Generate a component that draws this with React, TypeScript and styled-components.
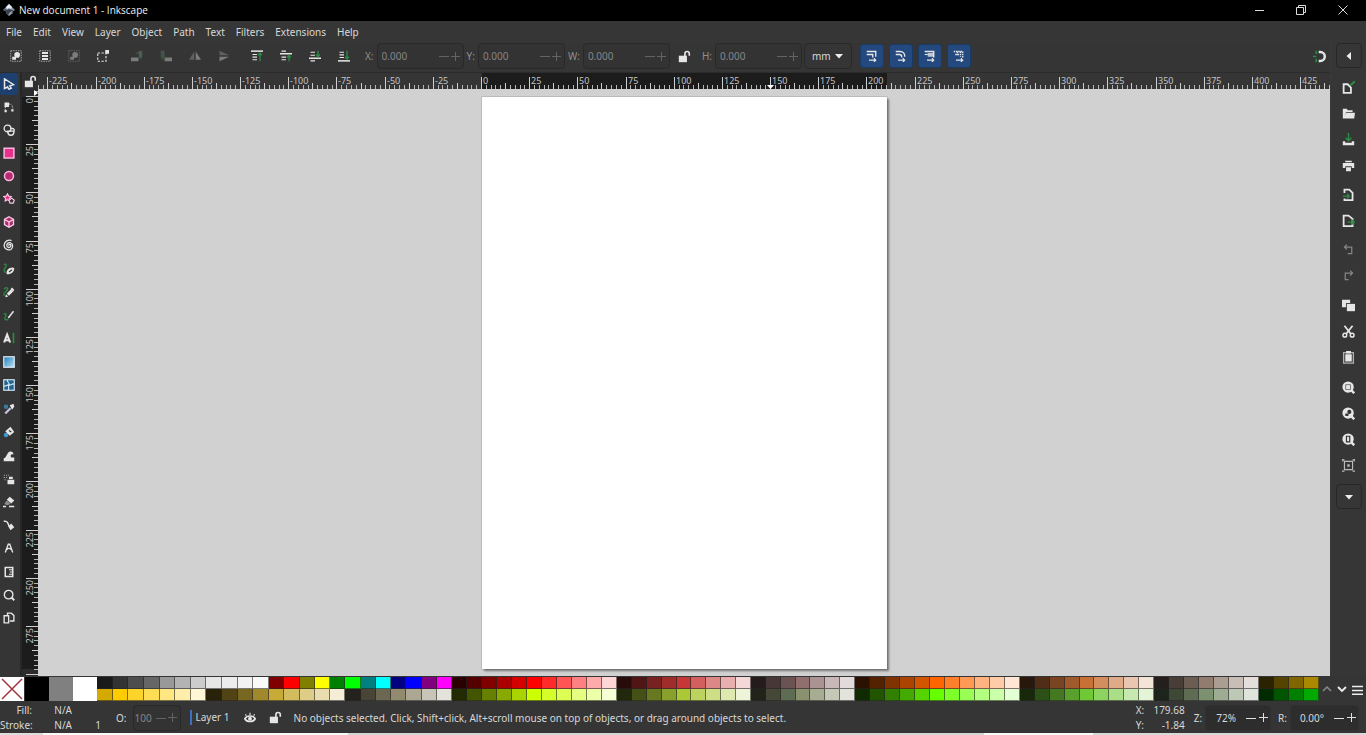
import React from 'react';
import styled, { createGlobalStyle, css } from 'styled-components';

const GlobalStyle = createGlobalStyle`
  * { box-sizing: border-box; }
  body { margin: 0; background: #353535; }
  body, button, input, select { font-family: "Noto Sans", "Open Sans", sans-serif; font-size: 10px; color: #d8d8d8; }
  button { border: 0; padding: 0; background: none; cursor: default; }
`;

const GREEN = '#2c8a43';
const LIGHT = '#e6e6e6';

/* ---------- shell ---------- */
const Shell = styled.div`
  display: flex;
  flex-direction: column;
  min-height: 100vh;
  background: #353535;
  overflow: hidden;
`;
const TitleBar = styled.header`
  display: flex;
  align-items: center;
  height: 21px;
  padding: 0 2px 1px 3px;
  background: #000;
`;
const Title = styled.h1`
  flex: 1;
  margin: 0 0 0 4px;
  font: 400 10px/20px "Open Sans", "Noto Sans", sans-serif;
  color: #f0f0f0;
`;
const WindowButton = styled.button`
  display: grid;
  place-items: center;
  width: 42px;
  height: 20px;
`;
const MenuBar = styled.nav`
  display: flex;
  gap: 11px;
  height: 22px;
  padding-left: 6px;
  background: #363636;
`;
const MenuItem = styled.button`
  line-height: 22px;
`;
const Body = styled.div`
  display: flex;
  flex: 1;
`;
const Work = styled.div`
  display: flex;
  flex-direction: column;
  flex: 1;
  min-width: 0;
`;

/* ---------- tool controls bar ---------- */
const ControlBar = styled.div`
  display: flex;
  align-items: center;
  height: 30px;
  padding: 0 0 3px 1px;
  border-bottom: 1px solid #2c2c2c;
`;
const ControlGroup = styled.div<{ $gap?: number }>`
  display: flex;
  margin-right: ${p => p.$gap ?? 0}px;
`;
const IconButton = styled.button<{ $dim?: boolean; $narrow?: boolean }>`
  display: grid;
  place-items: center;
  width: ${p => (p.$narrow ? 22 : 29)}px;
  height: 26px;
  opacity: ${p => (p.$dim ? 0.4 : 1)};
`;
const SpinLabel = styled.label`
  display: flex;
  align-items: center;
  gap: 3px;
  margin-left: 3px;
  color: #8f8f8f;
`;
const SpinBox = styled.span<{ $w: number; $bright?: boolean; $tight?: boolean }>`
  display: flex;
  align-items: center;
  width: ${p => p.$w}px;
  height: 26px;
  padding: 0 1px 0 ${p => (p.$tight ? 1 : 4)}px;
  border: 1px solid ${p => (p.$bright ? '#303030' : '#292929')};
  border-radius: 4px;
  background: ${p => (p.$bright ? '#2d2d2d' : '#333')};
  color: ${p => (p.$bright ? '#e0e0e0' : '#636363')};
`;
const SpinInput = styled.input<{ $bright?: boolean; $right?: boolean }>`
  flex: 1;
  min-width: 0;
  padding: 0;
  border: 0;
  outline: 0;
  background: none;
  text-align: ${p => (p.$right ? 'right' : 'left')};
  color: ${p => (p.$bright ? '#d8d8d8' : '#858585')};
  ${p => p.$right && css`padding-right: 9px;`}
`;
const StepButton = styled.button`
  display: grid;
  place-items: center;
  width: 12px;
  height: 20px;
  color: inherit;
`;
const UnitPicker = styled.span`
  display: flex;
  align-items: center;
  width: 48px;
  height: 26px;
  margin: 0 8px 0 2px;
  padding-right: 8px;
  border: 1px solid #282828;
  border-radius: 4px;
`;
const UnitSelect = styled.select`
  flex: 1;
  min-width: 0;
  appearance: none;
  border: 0;
  padding: 0 0 0 7px;
  background: none;
`;
const ToggleRow = styled.div`
  display: flex;
  gap: 5px;
  flex: 1;
`;
const Toggle = styled.button`
  display: grid;
  place-items: center;
  width: 24px;
  height: 24px;
  border: 1px solid #1a3a66;
  border-radius: 3px;
  background: #23497f;
`;

/* ---------- tools, rulers, canvas ---------- */
const Stage = styled.div`
  display: flex;
  flex: 1;
`;
const Toolbox = styled.aside`
  display: flex;
  flex-direction: column;
  width: 22px;
  border-right: 2px solid #272727;
`;
const Tool = styled.button<{ $active?: boolean; $space?: boolean }>`
  display: grid;
  place-items: center;
  width: 18px;
  height: ${p => (p.$active ? 22 : 23)}px;
  margin-top: ${p => (p.$space ? 1 : 0)}px;
  border-radius: 2px;
  background: ${p => (p.$active ? '#1d4070' : 'none')};
`;
const Editor = styled.main`
  display: grid;
  flex: 1;
  grid-template-columns: 16px minmax(0, 1fr);
  grid-template-rows: 16px 1fr;
`;
const RulerLock = styled.button`
  display: grid;
  place-items: center;
  background: #303030;
`;
const RulerStrip = styled.svg<{ $bg: string }>`
  display: block;
  width: 100%;
  height: 100%;
  background: ${p => p.$bg};
  overflow: hidden;
`;
const RulerHolder = styled.div`
  height: 0;
  min-height: 100%;
`;
const Canvas = styled.div`
  display: flex;
  justify-content: center;
  align-items: flex-start;
  padding: 8px 0 7px 0;
  background: #d1d1d1;
`;
const Page = styled.div`
  width: 405px;
  height: 572px;
  background: #fff;
  box-shadow: 0 0 1px #555, 2px 2px 2px #777;
`;

/* ---------- command bar ---------- */
const CommandBar = styled.aside`
  display: flex;
  flex-direction: column;
  align-items: center;
  width: 36px;
  padding: 0 2px;
  background: #363636;
  border-left: 1px solid #3a3a3a;
`;
const Expander = styled.button<{ $low?: boolean }>`
  display: grid;
  place-items: center;
  width: 26px;
  height: 25px;
  margin: ${p => (p.$low ? '6px 0 0' : '0 0 6px')};
  border: 1px solid #272727;
  border-radius: 4px;
`;
const Command = styled.button<{ $space?: number; $dim?: boolean }>`
  display: grid;
  place-items: center;
  width: 26px;
  height: 26px;
  margin-top: ${p => p.$space ?? 0}px;
  opacity: ${p => (p.$dim ? 0.45 : 1)};
`;

/* ---------- palette ---------- */
const Palette = styled.div`
  display: flex;
  height: 26px;
  padding: 1px 0;
`;
const BigSwatch = styled.button<{ $c: string }>`
  width: 24px;
  height: 24px;
  margin-right: 1px;
  background: ${p => p.$c};
  & + & { margin-right: 0; }
`;
const SwatchSet = styled.div<{ $w: number; $n: number }>`
  display: grid;
  flex: ${p => p.$w} 0 0;
  grid-template-columns: repeat(${p => p.$n}, 1fr);
  grid-template-rows: 12px 12px;
`;
const Swatch = styled.button<{ $c: string }>`
  background: ${p => p.$c};
  border: solid #24242499;
  border-width: 0 1px 1px 0;
`;
const PaletteNav = styled.div`
  display: flex;
  width: 47px;
  justify-content: space-around;
  align-items: center;
  padding-top: 2px;
`;

/* ---------- status bar ---------- */
const StatusBar = styled.footer`
  display: flex;
  align-items: center;
  height: 31px;
`;
const StyleTable = styled.dl`
  display: grid;
  grid-template-columns: 32px 48px 21px;
  width: 116px;
  margin: 0;
  line-height: 15px;
  dt { text-align: right; }
  dd { margin: 0; text-align: right; }
  dd.paint { padding-right: 8px; }
`;
const StatusField = styled.label<{ $gap: number }>`
  display: flex;
  align-items: center;
  gap: ${p => p.$gap}px;
  margin-right: 7px;
`;
const LayerButton = styled.button`
  height: 15px;
  padding-left: 4px;
  border-left: 2px solid #3f6fc0;
  line-height: 15px;
  margin: 0 7px 0 2px;
`;
const StatusIcon = styled.button`
  display: grid;
  place-items: center;
  width: 26px;
  height: 22px;
`;
const Message = styled.p`
  flex: 1;
  margin: 0 0 0 5px;
  white-space: nowrap;
`;
const Coords = styled.dl`
  display: grid;
  grid-template-columns: 12px 37px;
  margin: 0 9px 0 0;
  line-height: 15px;
  dd { margin: 0; text-align: right; }
`;
const Taskbar = styled.div`
  height: 2px;
  background: linear-gradient(90deg, #ddd 0 43px, #fafafa 43px 348px, #d6d6d6 348px 72%, #fafafa 72% 80%, #d9d9d9 80%);
`;

/* ---------- icons ---------- */
type IconProps = { s?: number; children: React.ReactNode };
const Icon = ({ s = 12, children }: IconProps) => (
  <svg width={s} height={s} viewBox="0 0 16 16" fill="none" stroke={LIGHT} strokeWidth="1.8" aria-hidden="true">{children}</svg>
);
const fill = { fill: LIGHT, stroke: 'none' };
const green = { stroke: GREEN };
const greenFill = { fill: GREEN, stroke: 'none' };

const Triangle = ({ dir = 'down' }: { dir?: 'down' | 'left' }) => (
  <svg width="8" height="8" viewBox="0 0 8 8" aria-hidden="true">
    <path fill="#eee" d={dir === 'down' ? 'M0 2h8L4 6.5z' : 'M6 0v8L1.500 4z'} />
  </svg>
);
const Lock = () => (
  <Icon s={13}><path {...fill} d="M1 7h10v8H1z" /><path strokeWidth="2" d="M8.500 8V4.500a2.700 2.700 0 0 1 5.400 0V7" /></Icon>
);
const frame = <path strokeWidth="1.200" strokeDasharray="2 1.200" opacity=".7" d="M1 1h14v14H1z" />;
const selection = <>{frame}<circle cx="9.500" cy="6.500" r="3.800" {...fill} /><path {...fill} d="M3 9h5v4H3z" /></>;

const selectIcons: [string, boolean, React.ReactNode][] = [
  ['Select all', false, selection],
  ['Select all in all layers', false, <>{frame}<path d="M4 4h8M4 8h8M4 12h8" strokeWidth="2.500" /></>],
  ['Deselect', true, selection],
  ['Touch selection', false, <><path strokeDasharray="3 2" strokeWidth="1.500" d="M1 4h11v11H1z" /><path {...fill} d="M11 0h5v5h-5z" /></>],
];
const rotateIcons: [string, boolean, React.ReactNode][] = [
  ['Rotate 90 counter-clockwise', true, <><path {...fill} d="M0 10h10v5H0z" /><path d="M6 4h7v9" {...green} /><path {...fill} d="M10 1h5v9h-5z" opacity=".4" /></>],
  ['Rotate 90 clockwise', true, <><path {...fill} d="M6 10h10v5H6z" /><path {...fill} d="M1 1h5v9H1z" opacity=".4" /><path d="M3 4v8h4" {...green} /></>],
  ['Flip horizontally', true, <><path {...fill} opacity=".6" d="M7 2v11H0z" /><path {...fill} d="M9 2v11h7z" /></>],
  ['Flip vertically', true, <><path {...fill} opacity=".6" d="M2 7h13L2 1z" /><path {...fill} d="M2 9h13L2 15z" /></>],
];
const orderIcons: [string, boolean, React.ReactNode][] = [
  ['Raise to top', false, <><path strokeWidth="2" d="M0 1.500h16" /><path strokeWidth="1.500" d="M2 6h6M2 9.500h6M2 13h6" /><path d="M12 15V4M9.500 7L12 4l2.500 3" {...green} /></>],
  ['Raise', false, <><path strokeWidth="2" d="M0 5h16" /><path strokeWidth="1.500" d="M2 1.500h6M2 9.500h6M2 13h6" /><path d="M12 15V7M9.500 10L12 7l2.500 3" {...green} /></>],
  ['Lower', false, <><path strokeWidth="2" d="M0 11h16" /><path strokeWidth="1.500" d="M2 3h6M2 7h6M2 14.500h6" /><path d="M12 1v8M9.500 6L12 9l2.500-3" {...green} /></>],
  ['Lower to bottom', false, <><path strokeWidth="2" d="M0 14.500h16" /><path strokeWidth="1.500" d="M2 3h6M2 6.500h6M2 10h6" /><path d="M12 1v11M9.500 9l2.500 3 2.500-3" {...green} /></>],
];
const scaleArrow = <path strokeWidth="1.500" d="M4 13.500h9M10.500 11l2.500 2.500-2.500 2.500" />;
const scaleIcons: [string, React.ReactNode][] = [
  ['Scale stroke width', <><path d="M1 2h12v7M1 6h8v4" />{scaleArrow}</>],
  ['Scale rounded corners', <><path d="M1 2h6a6 6 0 0 1 6 6v1M1 6h5a3 3 0 0 1 3 3v1" />{scaleArrow}</>],
  ['Move gradients', <><path d="M1 2h12v8" /><path {...fill} d="M5 4h8v5H5z" opacity=".8" /><path strokeWidth="1.500" d="M1 6h4" />{scaleArrow}</>],
  ['Move patterns', <><path strokeDasharray="2 1" d="M1 2h12v8M3 6h9M6 2v6M10 2v7" />{scaleArrow}</>],
];

const PINK = '#e8308c';
const BLUE = '#3a9ad0';
const tools: [string, boolean, React.ReactNode][] = [
  ['Selector', false, <path strokeWidth="2" d="M2 1l12 8-5 1.500 2 3-3 1.500-2-3-4 2z" />],
  ['Node', false, <><path {...fill} d="M2 2h6v6H2zM11 11h3v3h-3zM2 12h3v3H2z" /><path strokeWidth="1.200" strokeDasharray="1.500 1.500" d="M8 4c4 0 5 3 5 7M3 8v4" /></>],
  ['Shape builder', false, <><circle cx="6" cy="6" r="4.500" /><path d="M6 9.500h8.500V11a4 4 0 0 1-8 0zM10 6h2.500a2.500 2.500 0 0 1 2 4" /></>],
  ['Rectangle', false, <path fill={PINK} stroke="#ffb5dc" strokeWidth="2" d="M1.500 1.500h13v13h-13z" />],
  ['Ellipse', false, <circle cx="8" cy="8" r="6" fill="#b52c72" stroke="#ffb5dc" strokeWidth="2" />],
  ['Star', false, <><path fill={PINK} stroke="#ffc5e2" strokeWidth="1.500" d="M6 1l1.600 3.200 3.400.5-2.500 2.500.6 3.500L6 9l-3.100 1.700.6-3.500L1 4.700l3.400-.5z" /><path fill="#333" stroke="#ffc5e2" strokeWidth="1.600" d="M11.500 7l3.500 2.500-1.400 4H9.400L8 9.500z" /></>],
  ['3D box', false, <><path fill="#a62c6a" stroke="#ffc5e2" d="M8 1l6 3.500v7L8 15l-6-3.500v-7z" /><path stroke="#ffc5e2" d="M2 4.500L8 8l6-3.500M8 8v7" /></>],
  ['Spiral', false, <path strokeWidth="1.700" d="M8 9c-1-2 2-2.500 2.500-.5C11 11 7 12.500 5.500 10 4 7 7 4 10 5c4 1.500 3.500 7 .5 9C6 16 1 12.500 1.500 8 2 3 7 .5 11.500 2" />],
  ['Pen', true, <><path d="M1 2c4-2 4 2 1.500 5s0 5 2 6" {...green} /><path {...fill} d="M5 15c-1-5 2-9 8-9l2 1c0 5-4 8-9 8z" /><path stroke="#333" strokeWidth="1.500" d="M8 12l4-3" /></>],
  ['Pencil', false, <><path d="M1 4c5-4 7 0 3 3s-3 4-2 6" {...green} /><path strokeWidth="4" d="M6.500 11.500l6-6" /><path {...fill} d="M12 2l3 3-1 2-4-3zM3 15l1-4 3 3z" /></>],
  ['Calligraphy', false, <><path d="M1 7c3-2 4 1 2 4s0 4 4 3" {...green} /><path strokeWidth="2" d="M7 12l7-9" /></>],
  ['Text', false, <><path strokeWidth="2.800" d="M1.500 14L5.500 3.500l4 10.500M3 11h5" /><path strokeWidth="2.200" d="M14 1v14" {...green} /></>],
  ['Gradient', true, <><defs><linearGradient id="sky" x1="0" y1="0" x2="1" y2="1"><stop offset="0" stopColor="#1f7fb8" /><stop offset="1" stopColor="#b8e2f8" /></linearGradient></defs><rect x="1" y="1" width="14" height="14" fill="url(#sky)" stroke="#e6f2fa" strokeWidth="1.500" /></>],
  ['Mesh', false, <><rect x="1" y="1" width="14" height="14" fill="#22628c" stroke="#d5ecfa" strokeWidth="1.500" /><path stroke="#d5ecfa" strokeWidth="1.500" d="M6 1c-2 3 4 4 2 7s1 4-1 7M1 9c3 2 4-2 7-1s4-3 7-1" /></>],
  ['Dropper', true, <><circle cx="4" cy="5" r="3" fill={BLUE} stroke="none" opacity=".7" /><path strokeWidth="3" stroke="#c9bfe0" d="M3 14l7-7" /><path {...fill} d="M9 3l5-2 1 4-3 4z" /></>],
  ['Paint bucket', false, <><circle cx="4" cy="12" r="3" fill={BLUE} stroke="none" /><path {...fill} d="M3 7l7-6 5 7-6 5z" /><path stroke="#333" d="M8 6l3 2" /></>],
  ['Tweak', true, <path {...fill} d="M1 15v-4c4 0 4-9 9-9 3 0 4 2 4 4-3-1-5 1-3 4h4v5z" />],
  ['Spray', false, <><path {...fill} d="M6 9h9v6H6zM8 5h5v3H8z" /><path strokeWidth="1.500" strokeDasharray="1.500 1.500" opacity=".7" d="M1 3h7M1 6h6M2 9h3" /></>],
  ['Eraser', false, <><path {...fill} d="M9 1l6 5-4 4-6-5z" /><path {...fill} opacity=".5" d="M5 6l5 4-3 2H4L2 10z" /><path strokeWidth="2" d="M0 14h4M8 14h7" /></>],
  ['Connector', false, <><path strokeWidth="2" d="M1 3c6-1 5 3 7 6l3 1" /><path {...fill} d="M11 6l4 5-5 4-3-5z" /></>],
  ['LPE tool', false, <path strokeWidth="1.800" d="M3 14L7 3h2l4 11M5 10c2-2 4-2 6 0" />],
  ['Measure', true, <><path strokeWidth="2" d="M3 2h10v12H3z" /><path strokeWidth="1.500" d="M8 5h4M9 8h3M8 11h4" /></>],
  ['Zoom', false, <><circle cx="7.500" cy="7.500" r="5.700" /><path strokeWidth="2.500" d="M11 11l4 4" /></>],
  ['Pages', false, <><path d="M1.500 5h6v9.500h-6z" /><path d="M6 4V1.500h5l3.500 3V12H9" /></>],
];

const magnifier = <><circle cx="7.500" cy="7.500" r="7" {...fill} /><path strokeWidth="3" d="M11 11l4 4" /></>;
const doc = <path d="M2 2h6l5 4v9H2z" strokeWidth="2.200" />;
const commands: [string, number, boolean, React.ReactNode][] = [
  ['New', 0, false, <><path d="M2 4h5l4 4v6.500H2z" strokeWidth="2.200" /><path d="M10 5l2-1 4-4" {...green} strokeWidth="2.500" /></>],
  ['Open', 0, false, <path {...fill} d="M1 2h5l1 2h6v2H5L3 12 5 7h11l-1 7H1z" />],
  ['Save', 0, false, <><path {...fill} d="M1 10h3v2h8v-2h3v5H1z" /><path d="M8 0v9M4.500 6L8 9.500 11.500 6" {...green} /></>],
  ['Print', 0, false, <path {...fill} d="M4 2h8v2H4zM1 5h14v6h-3V9H4v2H1zM5 10h6v5H5z" />],
  ['Import', 3, false, <><path d="M3 6V2h6l4 4v9H3v-2" strokeWidth="2.200" /><path d="M1 10h8M6 7l3 3-3 3" {...green} /></>],
  ['Export', 0, false, <>{doc}<path d="M7 10h8M12 7l3 3-3 3" {...green} /></>],
  ['Undo', 3, true, <path strokeWidth="1.500" d="M6 2L3 5l3 3M3 5h9v8H7" />],
  ['Redo', 0, true, <path strokeWidth="1.500" d="M10 2l3 3-3 3M13 5H4v8h4" />],
  ['Copy', 4, false, <><path {...fill} d="M0 1h10v4H5v5H0z" /><path {...fill} d="M6 6h10v9H6z" /></>],
  ['Cut', 0, false, <><circle cx="3.500" cy="12.500" r="2.300" /><circle cx="12.500" cy="12.500" r="2.300" /><path strokeWidth="2.200" d="M3 1l8 10M13 1L5 11" /></>],
  ['Paste', 0, false, <><path strokeWidth="1.600" opacity=".7" d="M2 2h12v13H2z" /><path {...fill} d="M5 0h6v3H5zM4 4h8v9H4z" /></>],
  ['Zoom selection', 4, false, <>{magnifier}<path stroke="#777" strokeWidth="1.200" d="M4.500 4.500h6v6h-6z" /></>],
  ['Zoom drawing', 0, false, <>{magnifier}<circle cx="9" cy="6" r="2.500" fill="#333" stroke="none" /><path fill="#333" stroke="none" d="M4 8h4v3H4z" /></>],
  ['Zoom page', 0, false, <>{magnifier}<path stroke="#333" strokeWidth="1.500" d="M5.500 4h4v7h-4z" /></>],
  ['Zoom centre page', 0, false, <g opacity=".75"><path strokeWidth="1.400" d="M3 3h10v10H3zM0 1h3M1 0v3M13 1h3M15 0v3M0 15h3M13 15h3" /><path {...fill} d="M6.500 6.500h3v3h-3z" /></g>],
];

/* ---------- rulers ---------- */
const UNIT = 48.18;
const range = (a: number, b: number) => Array.from({ length: b - a + 1 }, (_, i) => a + i);
const tickSize = (i: number) => (i % 10 === 0 ? 12 : i % 5 === 0 ? 6 : 4);

const HorizontalRuler = () => (
  <RulerStrip $bg="#353535">
    <svg x="50%" overflow="visible">
      <rect x="-202" y="0" width="405" height="16" fill="#1c1c1c" />
      {range(-160, 240).map(i => {
        const x = Math.round(-203 + (i * UNIT) / 10);
        return <path key={i} d={`M${x + 0.5} ${16 - tickSize(i)}V16`} stroke={i % 5 ? '#b5b5b5' : '#cfcfcf'} />;
      })}
      {range(-9, 17).map(i => (
        <text key={i} x={Math.round(-203 + i * UNIT) + 2} y="11" fill="#c4c4c4" fontSize="9">{i * 25}</text>
      ))}
      <path fill="#fff" d="M83 12h7l-3.500 4z" />
    </svg>
  </RulerStrip>
);
const VerticalRuler = () => (
  <RulerStrip $bg="#2c2c2c">
    <rect x="0" y="8" width="16" height="572" fill="#1c1c1c" />
    {range(-1, 160).map(i => {
      const y = Math.round(7 + (i * UNIT) / 10);
      return <path key={i} d={`M${16 - tickSize(i)} ${y + 0.5}H16`} stroke={i % 5 ? '#b5b5b5' : '#cfcfcf'} />;
    })}
    {range(0, 11).map(i => (
      <text key={i} transform={`translate(11 ${Math.round(7 + i * UNIT) + 2}) rotate(-90)`} textAnchor="end" fill="#c4c4c4" fontSize="9">{i * 25}</text>
    ))}
    <path fill="#fff" d="M12 1v6l4-3z" />
  </RulerStrip>
);

/* ---------- palette data: [width weight, top row, bottom row] ---------- */
const palette: [number, string, string][] = [
  [172, '1a1a1a 333333 4d4d4d 666666 999999 b3b3b3 cccccc e6e6e6 ececec f2f2f2 f9f9f9', 'd4aa00 ffcc00 ffd42a ffdd55 ffe680 ffeeaa fff6d5 28220b 504416 786721 a0892c'],
  [183, '800000 ff0000 808000 ffff00 008000 00ff00 008080 00ffff 000080 0000ff 800080 ff00ff', 'c8ab37 d3bc5f decd87 e9ddaf f4eed7 24221c 484537 6c6753 918a6f aca793 c8c4b7 e3e2db'],
  [165, '2b0000 550000 800000 aa0000 d40000 ff0000 ff2a2a ff5555 ff8080 ffaaaa ffd5d5', '222b00 445500 668000 88aa00 aad400 ccff00 d4ff2a ddff55 e5ff80 eeffaa f6ffd5'],
  [134, '280b0b 501616 782121 a02c2c c83737 d35f5f de8787 e9afaf f4d7d7', '22280b 445016 677821 89a02c abc837 bcd35f cdde87 dde9af eef4d7'],
  [104, '241c1c 483737 6c5353 916f6f ac9393 c8b7b7 e3dbdb', '22241c 454837 5d6c53 8a916f a7ac93 c4c8b7 e2e3db'],
  [165, '2b1100 552200 803300 aa4400 d45500 ff6600 ff7f2a ff9955 ffb380 ffccaa ffe6d5', '112b00 225500 338000 44aa00 55d400 66ff00 7fff2a 99ff55 b3ff80 ccffaa e5ffd5'],
  [134, '28170b 502d16 784421 a05a2c c87137 d38d5f deaa87 e9c6af f4e3d7', '17280b 2d5016 447821 5aa02c 71c837 8dd35f aade87 c6e9af e3f4d7'],
  [105, '241f1c 483e37 6c5d53 917c6f ac9d93 c8beb7 e3dedb', '1c241c 3e4837 5d6c53 7c916f 9dac93 bec8b7 dee3db'],
  [60, '2b2200 554400 806600 aa8800', '002b00 005500 008000 00aa00'],
];

const Steps = () => (
  <>
    <StepButton aria-label="Decrease"><svg width="10" height="10"><path stroke="currentColor" d="M0 5.500h10" /></svg></StepButton>
    <StepButton aria-label="Increase"><svg width="9" height="9"><path stroke="currentColor" d="M0 4.500h9M4.500 0v9" /></svg></StepButton>
  </>
);
const Spin = ({ label }: { label: string }) => (
  <SpinLabel>
    {label}
    <SpinBox $w={87}><SpinInput defaultValue="0.000" /><Steps /></SpinBox>
  </SpinLabel>
);
const IconRow = ({ items, gap }: { items: [string, boolean, React.ReactNode][]; gap: number }) => (
  <ControlGroup $gap={gap}>
    {items.map(([n, dim, art]) => <IconButton key={n} aria-label={n} $dim={dim}><Icon>{art}</Icon></IconButton>)}
  </ControlGroup>
);

export default function App() {
  return (
    <Shell>
      <GlobalStyle />
      <TitleBar>
        <svg width="12" height="14" viewBox="0 0 12 14" aria-hidden="true">
          <path fill="#8f98a8" d="M6 1l6 6-3 2 1 1-4 3-3-3 1-1-4-2z" />
          <path fill="#e9edf5" d="M6 1l3 3-1 2-2-1-2 1-1-2z" />
          <path fill="#39404f" d="M2 6l2 1 2-1 3 1 2 0-4 2-2 3-2-2 1-1-3-2z" />
        </svg>
        <Title>New document 1 - Inkscape</Title>
        <WindowButton aria-label="Minimize"><svg width="9" height="9"><path stroke="#ddd" d="M0 4.500h9" /></svg></WindowButton>
        <WindowButton aria-label="Restore"><svg width="10" height="10" fill="none" stroke="#ddd"><path d="M.5 2.500h7v7h-7zM2.500 2.500v-2h7v7h-2" /></svg></WindowButton>
        <WindowButton aria-label="Close"><svg width="10" height="10"><path stroke="#ddd" d="M.5.5l9 9M9.500.5l-9 9" /></svg></WindowButton>
      </TitleBar>
      <MenuBar>
        {['File', 'Edit', 'View', 'Layer', 'Object', 'Path', 'Text', 'Filters', 'Extensions', 'Help'].map(m => <MenuItem key={m}>{m}</MenuItem>)}
      </MenuBar>

      <Body>
        <Work>
          <ControlBar>
            <IconRow items={selectIcons} gap={5} />
            <IconRow items={rotateIcons} gap={4} />
            <IconRow items={orderIcons} gap={4} />
            <Spin label="X:" />
            <Spin label="Y:" />
            <Spin label="W:" />
            <IconButton aria-label="Lock proportions"><Lock /></IconButton>
            <Spin label="H:" />
            <UnitPicker>
              <UnitSelect aria-label="Unit" defaultValue="mm"><option>mm</option><option>px</option></UnitSelect>
              <Triangle />
            </UnitPicker>
            <ToggleRow>
              {scaleIcons.map(([n, art]) => <Toggle key={n} aria-label={n}><Icon>{art}</Icon></Toggle>)}
            </ToggleRow>
            <IconButton $narrow aria-label="Snapping">
              <Icon s={13}><path strokeWidth="3" d="M7 2.500h2a5.500 5.500 0 0 1 0 11H7" /><path {...greenFill} d="M3 1h2v4H3zM3 11h2v4H3zM0 7h4v2H0z" /></Icon>
            </IconButton>
          </ControlBar>

          <Stage>
            <Toolbox>
              {tools.map(([n, space, art], i) => (
                <Tool key={n} aria-label={n} $space={space} $active={i === 0}><Icon>{art}</Icon></Tool>
              ))}
            </Toolbox>
            <Editor>
              <RulerLock aria-label="Lock guides"><Lock /></RulerLock>
              <HorizontalRuler />
              <RulerHolder><VerticalRuler /></RulerHolder>
              <Canvas><Page /></Canvas>
            </Editor>
          </Stage>
        </Work>

        <CommandBar>
          <Expander aria-label="Snap options"><Triangle dir="left" /></Expander>
          {commands.map(([n, space, dim, art]) => (
            <Command key={n} aria-label={n} $space={space} $dim={dim}><Icon s={13}>{art}</Icon></Command>
          ))}
          <Expander aria-label="More commands" $low><Triangle /></Expander>
        </CommandBar>
      </Body>

      <Palette>
        <BigSwatch $c="#fff" aria-label="None">
          <svg width="24" height="24" aria-hidden="true"><path stroke="#a3343f" strokeWidth="1.500" d="M2 2l20 20M22 2L2 22" /></svg>
        </BigSwatch>
        <BigSwatch $c="#000" aria-label="Black" />
        <BigSwatch $c="#808080" aria-label="50% gray" />
        <BigSwatch $c="#fff" aria-label="White" />
        {palette.map(([w, top, bottom]) => (
          <SwatchSet key={top} $w={w} $n={top.split(' ').length}>
            {`${top} ${bottom}`.split(' ').map((c, i) => <Swatch key={i} $c={`#${c}`} aria-label={`#${c}`} />)}
          </SwatchSet>
        ))}
        <PaletteNav>
          <svg width="10" height="10" fill="none" stroke="#8a8a8a" strokeWidth="1.500"><path d="M1 6l4-4 4 4" /></svg>
          <svg width="10" height="10" fill="none" stroke="#eee" strokeWidth="1.800"><path d="M1 2l4 4 4-4" /></svg>
          <svg width="11" height="10" stroke="#eee" strokeWidth="1.500"><path d="M0 1.500h11M0 5.500h11M0 9.250h11" /></svg>
        </PaletteNav>
      </Palette>

      <StatusBar>
        <StyleTable>
          <dt>Fill:</dt><dd className="paint">N/A</dd><dd />
          <dt>Stroke:</dt><dd className="paint">N/A</dd><dd>1</dd>
        </StyleTable>
        <StatusField $gap={6}>
          O:
          <SpinBox $w={48} $tight><SpinInput defaultValue="100" /><Steps /></SpinBox>
        </StatusField>
        <LayerButton>Layer 1</LayerButton>
        <StatusIcon aria-label="Toggle layer visibility">
          <Icon><path strokeWidth="2" d="M1 9c3-5 11-5 14 0-3 5-11 5-14 0z" /><circle cx="8" cy="9" r="2.600" {...fill} /><path strokeWidth="1.500" d="M3 5L2 3M8 4V1M13 5l1-2" /></Icon>
        </StatusIcon>
        <StatusIcon aria-label="Toggle layer lock"><Lock /></StatusIcon>
        <Message>No objects selected. Click, Shift+click, Alt+scroll mouse on top of objects, or drag around objects to select.</Message>
        <Coords><dt>X:</dt><dd>179.68</dd><dt>Y:</dt><dd>-1.84</dd></Coords>
        <StatusField $gap={3}>Z:<SpinBox $w={66} $bright><SpinInput $bright $right defaultValue="72%" /><Steps /></SpinBox></StatusField>
        <StatusField $gap={3}>R:<SpinBox $w={69} $bright><SpinInput $bright $right defaultValue="0.00°" /><Steps /></SpinBox></StatusField>
      </StatusBar>
      <Taskbar />
    </Shell>
  );
}
